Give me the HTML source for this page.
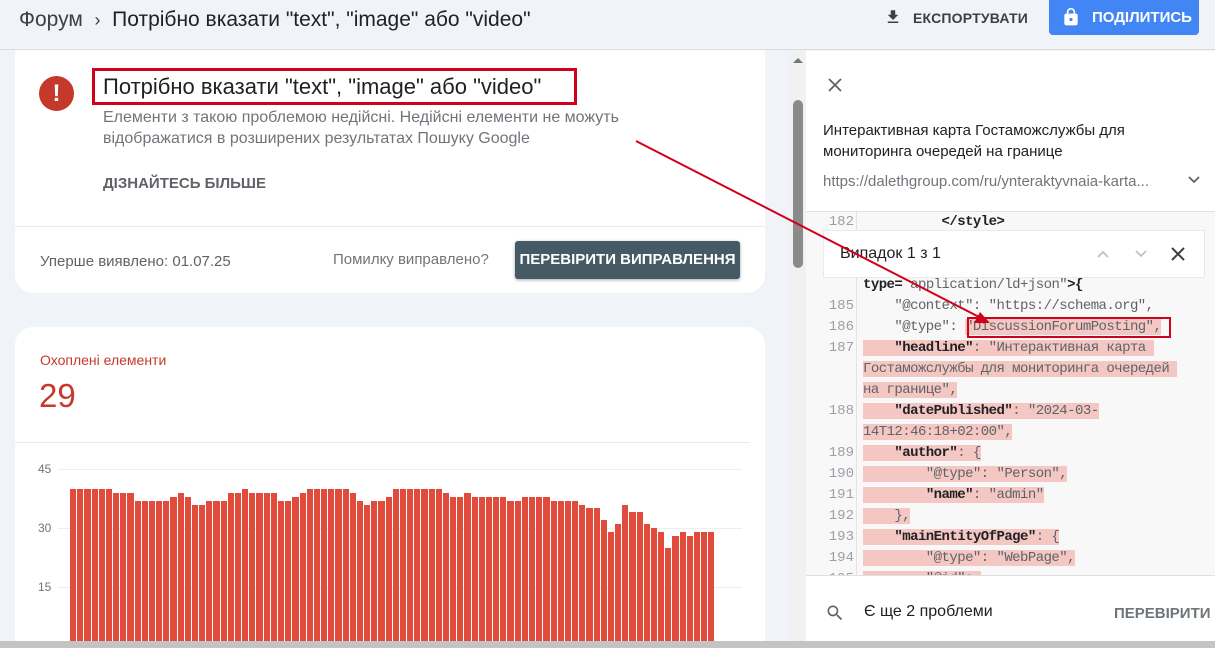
<!DOCTYPE html>
<html><head><meta charset="utf-8">
<style>
*{box-sizing:border-box;margin:0;padding:0}
html,body{width:1215px;height:648px;overflow:hidden}
body{background:#f0f4f9;font-family:"Liberation Sans",Arial,sans-serif;position:relative;color:#202124}
.top{position:absolute;left:0;top:0;width:1215px;height:50px;border-bottom:1px solid #dadce0;background:#f0f4f9}
.crumb{position:absolute;left:19px;top:8px;font-size:21px;color:#3c4043;white-space:nowrap}
.crumb b{font-weight:normal;color:#202124}
.exp{position:absolute;left:884px;top:10px;font-size:14px;font-weight:bold;color:#3c4043;letter-spacing:.2px}
.share{position:absolute;left:1049px;top:0;width:150px;height:35px;background:#4285f4;border-radius:0 0 4px 4px;color:#fff;font-weight:bold;font-size:15px}
.card{position:absolute;background:#fff;border-radius:18px}
.c1{left:15px;top:50px;width:750px;height:243px;border-radius:0 0 18px 18px}
.c2{left:15px;top:327px;width:750px;height:314px;border-radius:18px 18px 0 0}
.sb{position:absolute;left:790px;top:50px;width:16px;height:592px;background:#f1f1f1}
.thumb{position:absolute;left:793px;top:100px;width:10px;height:168px;background:#8a8a8a;border-radius:5px}
.rp{position:absolute;left:806px;top:51px;width:409px;height:590px;background:#fff}
.code{position:absolute;left:806px;top:211px;width:409px;height:364px;background:#f8f8f8;border-top:1px solid #e0e0e0;overflow:hidden;font-family:"Liberation Mono",monospace;font-size:14px;letter-spacing:-.55px}
.gut{position:absolute;left:50px;top:0;width:1px;height:364px;background:#e3e3e3}
.ln{position:absolute;left:10px;width:38px;text-align:right;color:#9aa0a6;letter-spacing:0}
.tx{position:absolute;left:57px;white-space:pre;color:#5f6368}
.hl{background:#f4c7c3}
.k{font-weight:bold;color:#202124}
.bars{position:absolute;left:70px;top:440px;height:206px;width:645px;display:flex;align-items:flex-end;gap:1px}
.bars div{flex:1;background:#e04b3c}
.bottom{position:absolute;left:0;top:641px;width:1215px;height:7px;background:#c4c4c4}
</style></head><body>
<div class="top"></div>
<div class="crumb">Форум &nbsp;<span style="font-size:18px">&#8250;</span>&nbsp; <b>Потрібно вказати "text", "image" або "video"</b></div>
<svg style="position:absolute;left:884px;top:8px" width="18" height="18" viewBox="0 0 24 24"><path d="M19 9h-4V3H9v6H5l7 7 7-7zM5 18v2h14v-2H5z" fill="#3c4043"/></svg>
<div class="exp" style="left:913px">ЕКСПОРТУВАТИ</div>
<div class="share"><svg style="position:absolute;left:12px;top:6px" width="20" height="22" viewBox="0 0 24 24"><path d="M18 8h-1V6c0-2.76-2.24-5-5-5S7 3.24 7 6v2H6c-1.1 0-2 .9-2 2v10c0 1.1.9 2 2 2h12c1.1 0 2-.9 2-2V10c0-1.1-.9-2-2-2zm-6 9c-1.1 0-2-.9-2-2s.9-2 2-2 2 .9 2 2-.9 2-2 2zM9 8V6c0-1.66 1.34-3 3-3s3 1.34 3 3v2H9z" fill="#fff"/></svg><span style="position:absolute;left:43px;top:9px">ПОДІЛИТИСЬ</span></div>

<div class="card c1">
 <div style="position:absolute;left:24px;top:26px;width:35px;height:35px;border-radius:50%;background:#c5392b;color:#fff;font-weight:bold;font-size:24px;text-align:center;line-height:35px">!</div>
 <div style="position:absolute;left:77px;top:18px;width:485px;height:37px;border:3px solid #d0021b"></div>
 <div style="position:absolute;left:88px;top:24px;font-size:22px;color:#202124">Потрібно вказати "text", "image" або "video"</div>
 <div style="position:absolute;left:88px;top:57px;font-size:16px;line-height:21px;color:#70757a">Елементи з такою проблемою недійсні. Недійсні елементи не можуть<br>відображатися в розширених результатах Пошуку Google</div>
 <div style="position:absolute;left:88px;top:125px;font-size:15px;font-weight:bold;color:#5f6368">ДІЗНАЙТЕСЬ БІЛЬШЕ</div>
 <div style="position:absolute;left:0;top:176px;width:750px;height:1px;background:#e8eaed"></div>
 <div style="position:absolute;left:25px;top:203px;font-size:15px;color:#5f6368">Уперше виявлено: 01.07.25</div>
 <div style="position:absolute;left:318px;top:201px;font-size:15px;color:#70757a">Помилку виправлено?</div>
 <div style="position:absolute;left:500px;top:191px;width:225px;height:38px;background:#455a64;border-radius:3px;box-shadow:0 1px 3px rgba(0,0,0,.35);color:#fff;font-size:15px;font-weight:bold;text-align:center;line-height:38px">ПЕРЕВІРИТИ ВИПРАВЛЕННЯ</div>
</div>

<div class="card c2">
 <div style="position:absolute;left:25px;top:25px;font-size:14px;color:#c5392b">Охоплені елементи</div>
 <div style="position:absolute;left:24px;top:50px;font-size:33px;color:#c5392b">29</div>
 <div style="position:absolute;left:0;top:115px;width:735px;height:1px;background:#e8eaed"></div>
 <div style="position:absolute;left:23px;top:135px;font-size:12px;color:#70757a">45</div>
 <div style="position:absolute;left:23px;top:194px;font-size:12px;color:#70757a">30</div>
 <div style="position:absolute;left:23px;top:253px;font-size:12px;color:#70757a">15</div>
 <div style="position:absolute;left:23px;top:312px;font-size:12px;color:#70757a">0</div>
 <div style="position:absolute;left:43px;top:142px;width:684px;height:1px;background:#eee"></div>
 <div style="position:absolute;left:43px;top:201px;width:684px;height:1px;background:#eee"></div>
 <div style="position:absolute;left:43px;top:260px;width:684px;height:1px;background:#eee"></div>
</div>
<div class="bars">
<div style="height:157px"></div><div style="height:157px"></div><div style="height:157px"></div><div style="height:157px"></div><div style="height:157px"></div><div style="height:157px"></div>
<div style="height:153px"></div><div style="height:153px"></div><div style="height:153px"></div>
<div style="height:145px"></div><div style="height:145px"></div><div style="height:145px"></div><div style="height:145px"></div><div style="height:145px"></div>
<div style="height:149px"></div><div style="height:153px"></div><div style="height:149px"></div>
<div style="height:141px"></div><div style="height:141px"></div>
<div style="height:145px"></div><div style="height:145px"></div><div style="height:145px"></div>
<div style="height:153px"></div><div style="height:153px"></div><div style="height:157px"></div>
<div style="height:153px"></div><div style="height:153px"></div><div style="height:153px"></div><div style="height:153px"></div>
<div style="height:145px"></div><div style="height:145px"></div><div style="height:149px"></div><div style="height:153px"></div>
<div style="height:157px"></div><div style="height:157px"></div><div style="height:157px"></div><div style="height:157px"></div><div style="height:157px"></div><div style="height:157px"></div>
<div style="height:153px"></div><div style="height:145px"></div><div style="height:141px"></div><div style="height:145px"></div><div style="height:145px"></div><div style="height:149px"></div>
<div style="height:157px"></div><div style="height:157px"></div><div style="height:157px"></div><div style="height:157px"></div><div style="height:157px"></div><div style="height:157px"></div><div style="height:157px"></div>
<div style="height:153px"></div><div style="height:149px"></div><div style="height:149px"></div><div style="height:153px"></div>
<div style="height:149px"></div><div style="height:149px"></div><div style="height:149px"></div><div style="height:149px"></div><div style="height:149px"></div>
<div style="height:145px"></div><div style="height:145px"></div>
<div style="height:149px"></div><div style="height:149px"></div><div style="height:149px"></div><div style="height:149px"></div>
<div style="height:145px"></div><div style="height:145px"></div><div style="height:145px"></div><div style="height:145px"></div>
<div style="height:141px"></div><div style="height:138px"></div><div style="height:138px"></div><div style="height:126px"></div><div style="height:114px"></div><div style="height:122px"></div><div style="height:141px"></div><div style="height:134px"></div><div style="height:134px"></div><div style="height:122px"></div><div style="height:118px"></div><div style="height:114px"></div><div style="height:98px"></div><div style="height:110px"></div><div style="height:114px"></div><div style="height:110px"></div><div style="height:114px"></div><div style="height:114px"></div><div style="height:114px"></div>
</div>

<div class="sb"></div>
<div style="position:absolute;left:793px;top:58px;width:0;height:0;border-left:5px solid transparent;border-right:5px solid transparent;border-bottom:5px solid #777"></div>
<div class="thumb"></div>

<div class="rp">
 <svg style="position:absolute;left:21px;top:26px" width="16" height="16" viewBox="0 0 16 16"><path d="M2 2L14 14M14 2L2 14" stroke="#5f6368" stroke-width="1.8"/></svg>
 <div style="position:absolute;left:17px;top:69px;font-size:15px;line-height:21px;color:#202124">Интерактивная карта Гостаможслужбы для<br>мониторинга очередей на границе</div>
 <div style="position:absolute;left:17px;top:122px;font-size:15px;color:#70757a;white-space:nowrap">https://dalethgroup.com/ru/ynteraktyvnaia-karta...</div>
 <svg style="position:absolute;left:381px;top:124px" width="14" height="10" viewBox="0 0 14 10"><path d="M2 2L7 7L12 2" stroke="#5f6368" stroke-width="1.8" fill="none"/></svg>
</div>

<div class="code">
 <div class="gut"></div>
 <div class="ln" style="top:2px">182</div><div class="tx k" style="top:2px">          &lt;/style&gt;</div>
 <div class="tx" style="top:65px"><span class="k">type=</span> application/ld+json"<span class="k">&gt;{</span></div>
 <div class="ln" style="top:86px">185</div><div class="tx" style="top:86px">    "@context": "https://schema.org",</div>
 <div class="ln" style="top:107px">186</div><div class="tx" style="top:107px">    "@type": <span class="hl">"DiscussionForumPosting",</span></div>
 <div class="ln" style="top:128px">187</div><div class="tx" style="top:128px"><span class="hl">    <span class="k">"headline"</span>: "Интерактивная карта </span></div>
 <div class="tx" style="top:149px"><span class="hl">Гостаможслужбы для мониторинга очередей </span></div>
 <div class="tx" style="top:170px"><span class="hl">на границе",</span></div>
 <div class="ln" style="top:191px">188</div><div class="tx" style="top:191px"><span class="hl">    <span class="k">"datePublished"</span>: "2024-03-</span></div>
 <div class="tx" style="top:212px"><span class="hl">14T12:46:18+02:00",</span></div>
 <div class="ln" style="top:233px">189</div><div class="tx" style="top:233px"><span class="hl">    <span class="k">"author"</span>: {</span></div>
 <div class="ln" style="top:254px">190</div><div class="tx" style="top:254px"><span class="hl">        "@type": "Person",</span></div>
 <div class="ln" style="top:275px">191</div><div class="tx" style="top:275px"><span class="hl">        <span class="k">"name"</span>: "admin"</span></div>
 <div class="ln" style="top:296px">192</div><div class="tx" style="top:296px"><span class="hl">    },</span></div>
 <div class="ln" style="top:317px">193</div><div class="tx" style="top:317px"><span class="hl">    <span class="k">"mainEntityOfPage"</span>: {</span></div>
 <div class="ln" style="top:338px">194</div><div class="tx" style="top:338px"><span class="hl">        "@type": "WebPage",</span></div>
 <div class="ln" style="top:359px">195</div><div class="tx" style="top:359px"><span class="hl">        "@id": </span></div>
 <div style="position:absolute;left:17px;top:18px;width:382px;height:48px;background:#fff;border:1px solid #e8eaed;font-family:'Liberation Sans',sans-serif;letter-spacing:0">
  <div style="position:absolute;left:16px;top:14px;font-size:16px;color:#202124">Випадок 1 з 1</div>
  <svg style="position:absolute;left:272px;top:18px" width="14" height="10" viewBox="0 0 14 10"><path d="M2 8L7 3L12 8" stroke="#bdc1c6" stroke-width="1.8" fill="none"/></svg>
  <svg style="position:absolute;left:310px;top:18px" width="14" height="10" viewBox="0 0 14 10"><path d="M2 2L7 7L12 2" stroke="#bdc1c6" stroke-width="1.8" fill="none"/></svg>
  <svg style="position:absolute;left:346px;top:15px" width="16" height="16" viewBox="0 0 16 16"><path d="M2 2L14 14M14 2L2 14" stroke="#3c4043" stroke-width="2"/></svg>
 </div>
 <div style="position:absolute;left:161px;top:105px;width:204px;height:21px;border:2px solid #d0021b"></div>
</div>

<div style="position:absolute;left:806px;top:575px;width:409px;height:66px;background:#fff;border-top:1px solid #e0e0e0"></div>
<svg style="position:absolute;left:825px;top:603px" width="20" height="20" viewBox="0 0 24 24"><path d="M15.5 14h-.79l-.28-.27A6.470 6.470 0 0 0 16 9.5 6.5 6.5 0 1 0 9.5 16c1.61 0 3.09-.59 4.230-1.57l.27.28v.79l5 4.99L20.49 19l-4.99-5zm-6 0C7.01 14 5 11.99 5 9.5S7.01 5 9.5 5 14 7.01 14 9.5 11.99 14 9.5 14z" fill="#5f6368"/></svg>
<div style="position:absolute;left:864px;top:603px;font-size:16px;color:#202124">Є ще 2 проблеми</div>
<div style="position:absolute;left:1114px;top:605px;font-size:15px;font-weight:bold;color:#70757a">ПЕРЕВІРИТИ</div>

<svg style="position:absolute;left:0;top:0" width="1215" height="648"><line x1="636" y1="141" x2="983" y2="319" stroke="#d0021b" stroke-width="2"/><path d="M990 323L974 323L980 312Z" fill="#d0021b"/></svg>
<div class="bottom"></div>
</body></html>
